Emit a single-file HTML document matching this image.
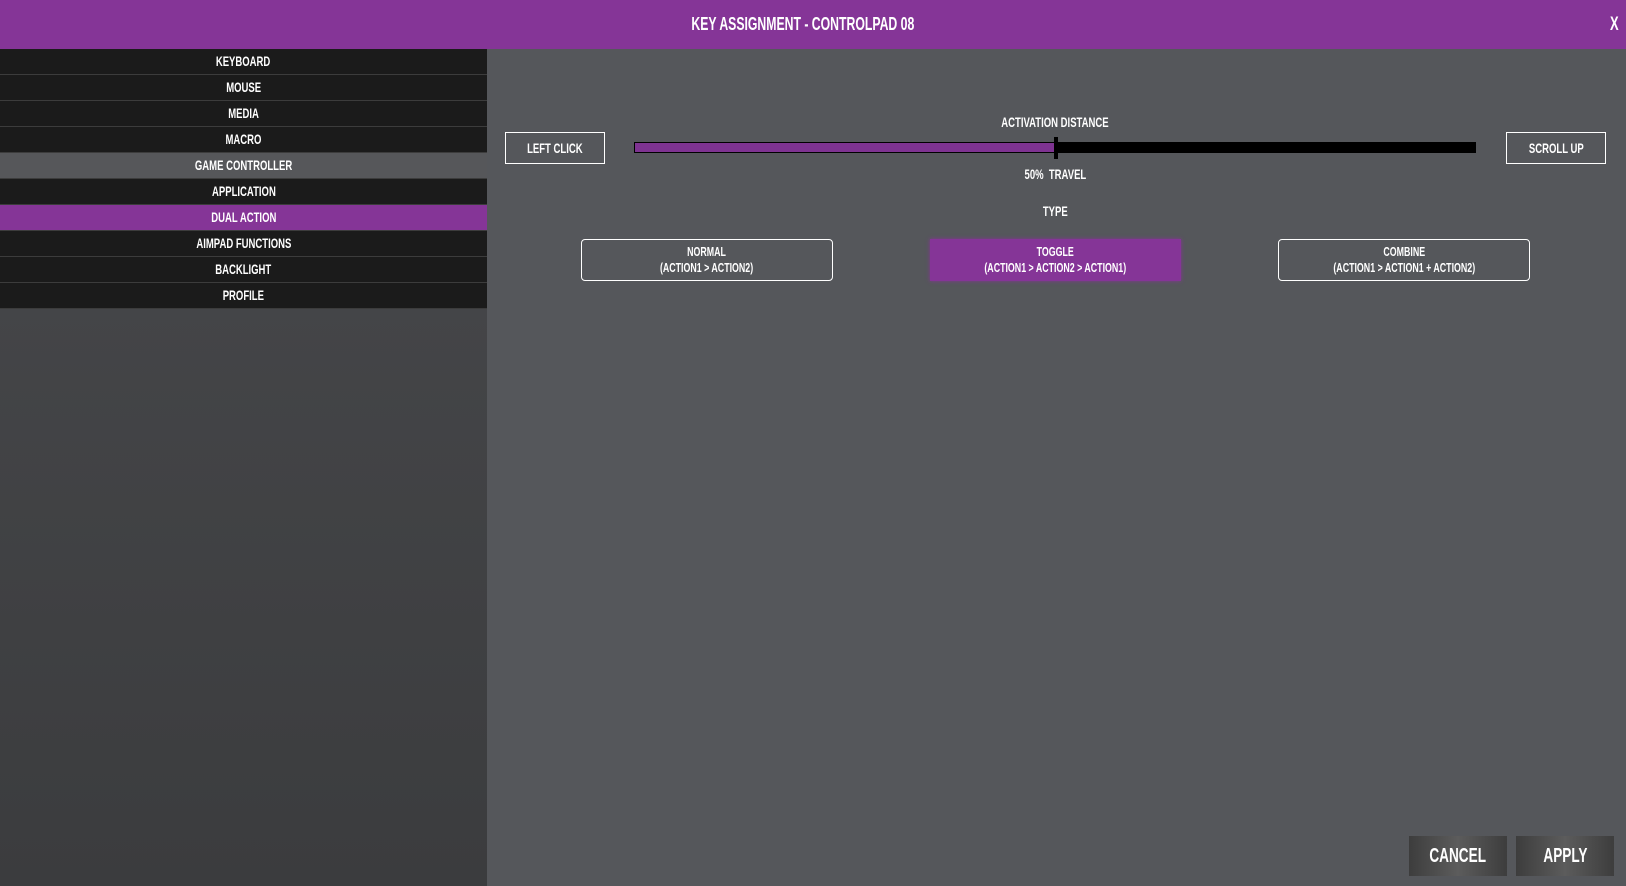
<!DOCTYPE html>
<html><head><meta charset="utf-8"><style>
*{margin:0;padding:0;box-sizing:border-box}
body{width:1626px;height:886px;overflow:hidden;background:#55575b;font-family:"Liberation Sans",sans-serif;color:#fff;position:relative}
.n{display:inline-block;transform:scaleX(.68);white-space:nowrap;font-weight:bold}
.hdr{position:absolute;left:0;top:0;width:1626px;height:49px;background:#853597}
.title{position:absolute;left:0;width:1606px;top:14px;text-align:center;font-size:18px}
.x{position:absolute;right:5px;top:14px;font-size:19px}
.side{position:absolute;left:0;top:49px;width:487px;height:837px;background:linear-gradient(#48494c,#3b3c3e)}
.row{height:26px;background:#1b1b1b;border-bottom:1px solid #3c3c3c;text-align:center;font-size:14px;line-height:25px}
.row.g{background:#56575a}.row.p{background:#853597}
.ab{position:absolute;font-size:14px;text-align:center}
.box{position:absolute;border:1px solid #fff;font-size:14px;text-align:center}
.tb{position:absolute;border:1px solid #fff;border-radius:4px;font-size:13px;text-align:center;line-height:16px;padding-top:4px}
.btn{position:absolute;top:836px;height:40px;background:linear-gradient(90deg,#3d3d3d,#5c5c5c 50%,#3d3d3d);font-size:20px;line-height:40px;text-align:center}
</style></head><body>
<div class="hdr"><div class="title"><span class="n">KEY ASSIGNMENT - CONTROLPAD 08</span></div><div class="x"><span class="n">X</span></div></div>
<div class="side">
<div class="row"><span class="n">KEYBOARD</span></div><div class="row"><span class="n">MOUSE</span></div><div class="row"><span class="n">MEDIA</span></div><div class="row"><span class="n">MACRO</span></div>
<div class="row g"><span class="n">GAME CONTROLLER</span></div><div class="row"><span class="n">APPLICATION</span></div><div class="row p"><span class="n">DUAL ACTION</span></div>
<div class="row"><span class="n">AIMPAD FUNCTIONS</span></div><div class="row"><span class="n">BACKLIGHT</span></div><div class="row"><span class="n">PROFILE</span></div>
</div>
<div class="ab" style="left:955px;width:200px;top:114px"><span class="n">ACTIVATION DISTANCE</span></div>
<div class="box" style="left:505px;top:132px;width:100px;height:32px;line-height:30px"><span class="n">LEFT CLICK</span></div>
<div class="box" style="left:1506px;top:132px;width:100px;height:32px;line-height:30px"><span class="n">SCROLL UP</span></div>
<div style="position:absolute;left:634px;top:142px;width:842px;height:11px;background:#000"></div>
<div style="position:absolute;left:635px;top:143px;width:421px;height:9px;background:#7e3391"></div>
<div style="position:absolute;left:1054px;top:137px;width:4px;height:22px;background:#000"></div>
<div class="ab" style="left:955px;width:200px;top:166px"><span class="n">50%&nbsp; TRAVEL</span></div>
<div class="ab" style="left:955px;width:200px;top:203px"><span class="n">TYPE</span></div>
<div class="tb" style="left:581px;top:239px;width:252px;height:42px"><span class="n">NORMAL<br>(ACTION1 &gt; ACTION2)</span></div>
<div class="tb" style="left:930px;top:239px;width:251px;height:42px;background:#853597;border-color:#853597;border-radius:0;box-shadow:0 0 4px #853597"><span class="n">TOGGLE<br>(ACTION1 &gt; ACTION2 &gt; ACTION1)</span></div>
<div class="tb" style="left:1278px;top:239px;width:252px;height:42px"><span class="n">COMBINE<br>(ACTION1 &gt; ACTION1 + ACTION2)</span></div>
<div class="btn" style="left:1409px;width:98px"><span class="n">CANCEL</span></div>
<div class="btn" style="left:1516px;width:98px"><span class="n">APPLY</span></div>
</body></html>
